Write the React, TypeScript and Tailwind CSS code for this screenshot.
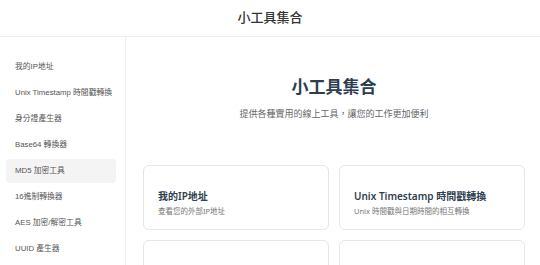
const tools = [
  "我的IP地址",
  "Unix Timestamp 時間戳轉換",
  "身分證產生器",
  "Base64 轉換器",
  "MD5 加密工具",
  "16進制轉換器",
  "AES 加密/解密工具",
  "UUID 產生器",
]

const cards = [
  { title: "我的IP地址", desc: "查看您的外部IP地址" },
  { title: "Unix Timestamp 時間戳轉換", desc: "Unix 時間戳與日期時間的相互轉換" },
  { title: "身分證產生器", desc: "產生隨機的身分證字號" },
  { title: "Base64 轉換器", desc: "Base64 編碼與解碼" },
]

const App = () => {
  return (
    <div
      className="flex h-[265px] w-[540px] flex-col overflow-hidden bg-white text-[#333]"
      style={{ fontFamily: '"Noto Sans", "Noto Sans CJK TC", sans-serif' }}
    >
      <header className="flex h-[37px] shrink-0 items-center justify-center border-b border-[#eeeeee]">
        <h1 className="text-[13px] font-medium text-[#333]">小工具集合</h1>
      </header>

      <div className="flex min-h-0 flex-1">
        <aside
          className="flex w-[126px] shrink-0 flex-col gap-[2px] border-r border-[#eeeeee] pl-[6px] pr-[9px] pt-[18px]"
          style={{ fontFamily: '"Liberation Sans", "Noto Sans CJK TC", sans-serif' }}
        >
          {tools.map((tool) => (
            <div
              key={tool}
              className={`flex h-[24px] shrink-0 items-center whitespace-nowrap rounded-[4px] px-[9px] text-[7.8px] text-[#555] ${
                tool === "MD5 加密工具" ? "bg-[#f4f4f4]" : ""
              }`}
            >
              {tool}
            </div>
          ))}
        </aside>

        <main className="flex min-w-0 flex-1 flex-col items-center pl-[17px] pr-[15px] pt-[38px]">
          <h2 className="text-[17px] leading-[24px] font-bold text-[#2c3e50]">小工具集合</h2>
          <p className="mt-[8px] text-[9px] leading-[14px] text-[#666]">提供各種實用的線上工具，讓您的工作更加便利</p>

          <div className="mt-[44px] grid w-full grid-cols-2 gap-[10px]">
            {cards.map((card) => (
              <div
                key={card.title}
                className="h-[65px] rounded-[6px] border border-[#e3e6ea] bg-white px-[14px] pt-[23px]"
              >
                <p className="text-[10px] leading-[14px] font-semibold text-[#2c3e50]">{card.title}</p>
                <p className="mt-[3px] text-[7.5px] leading-[10px] text-[#777]">{card.desc}</p>
              </div>
            ))}
          </div>
        </main>
      </div>
    </div>
  )
}

export default App
